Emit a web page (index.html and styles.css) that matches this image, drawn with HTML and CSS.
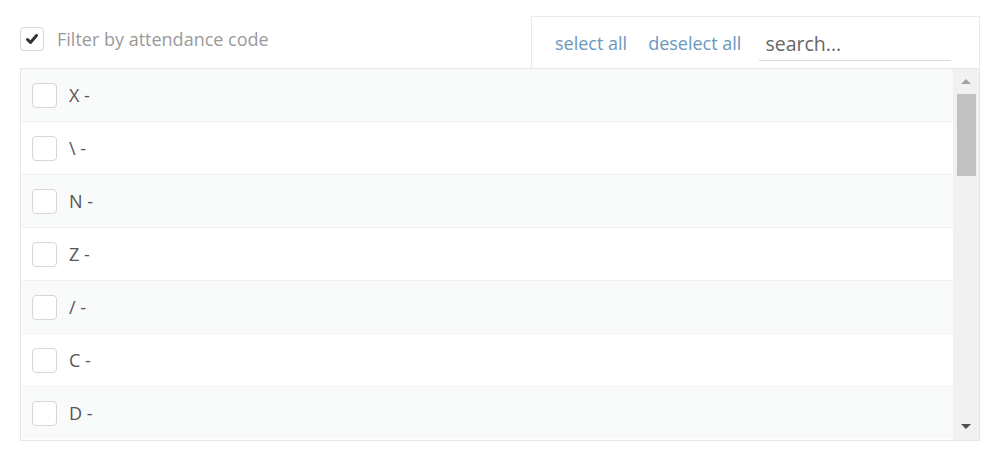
FILE: index.html
```html
<!DOCTYPE html>
<html>
<head>
<meta charset="utf-8">
<link rel="stylesheet" href="styles.css">
</head>
<body>
<div class="wrap">
  <div class="header">
    <label class="filter">
      <span class="cb checked">
        <svg width="14" height="12" viewBox="0 0 14 12"><path d="M2.5 6.5 L5.5 9.5 L11.5 2.5" fill="none" stroke="#333" stroke-width="3" stroke-linecap="round" stroke-linejoin="round"/></svg>
      </span>
      <span class="filter-text">Filter by attendance code</span>
    </label>
    <div class="tools">
      <a class="link">select all</a>
      <a class="link">deselect all</a>
      <div class="search">search...</div>
    </div>
  </div>
  <div class="listbox">
    <div class="rows">
      <div class="row odd"><span class="cb"></span><span class="lbl">X -</span></div>
      <div class="row"><span class="cb"></span><span class="lbl">\ -</span></div>
      <div class="row odd"><span class="cb"></span><span class="lbl">N -</span></div>
      <div class="row"><span class="cb"></span><span class="lbl">Z -</span></div>
      <div class="row odd"><span class="cb"></span><span class="lbl">/ -</span></div>
      <div class="row"><span class="cb"></span><span class="lbl">C -</span></div>
      <div class="row odd last"><span class="cb"></span><span class="lbl">D -</span></div>
    </div>
    <div class="scrollbar">
      <div class="arrow up"></div>
      <div class="thumb"></div>
      <div class="track"></div>
      <div class="arrow down"></div>
    </div>
  </div>
</div>
</body>
</html>
```
FILE: styles.css
```css
* { box-sizing: border-box; }
html, body { margin: 0; padding: 0; background: #fff; }
body { font-family: "Open Sans", "Noto Sans", sans-serif; color: #555; }
.wrap { padding: 16px 20px 0 20px; width: 1000px; }
.header { display: flex; justify-content: space-between; height: 52px; }
.filter { display: flex; align-items: center; height: 46px; align-self: flex-start; }
.cb {
  width: 25px; height: 25px; border: 1px solid #d6d6d6; border-radius: 4px;
  background: #fff; display: inline-flex; align-items: center; justify-content: center; flex: none;
}
.filter .cb { width: 24px; height: 24px; }
.filter-text { margin-left: 13px; font-size: 18px; color: #9a9a9a; }
.tools {
  width: 449px; height: 52px; border: 1px solid #eaeaea; border-bottom: none;
  display: flex; align-items: center; padding-left: 23px;
}
.link { font-size: 18px; color: #6b97bf; margin-right: 21px; }
.link + .link { margin-right: 18px; }
.search {
  width: 192px; height: 34px; border-bottom: 1px solid #d9d9d9; font-size: 19.5px; color: #666;
  padding-left: 6px; line-height: 33px; margin-top: 2px;
}
.listbox { display: flex; border: 1px solid #e6e6e6; height: 373px; }
.rows { flex: 1; }
.row {
  height: 53px; border-bottom: 1px solid #f1f1f1; display: flex; align-items: center;
  padding-left: 11px; background: #fff;
}
.row.odd { background: #f9fbfb; }
.row.last { border-bottom: none; height: 52px; }
.lbl { margin-left: 12px; font-size: 18px; color: #555; }
.scrollbar { width: 26px; background: #f1f1f1; display: flex; flex-direction: column; align-items: center; }
.arrow { width: 0; height: 0; border-left: 5px solid transparent; border-right: 5px solid transparent; }
.arrow.up { border-bottom: 5px solid #a3a3a3; margin-top: 10px; }
.arrow.down { border-top: 5px solid #505050; margin-bottom: 11px; }
.thumb { width: 19px; height: 82px; background: #c1c1c1; margin-top: 10px; }
.track { flex: 1; }
```
